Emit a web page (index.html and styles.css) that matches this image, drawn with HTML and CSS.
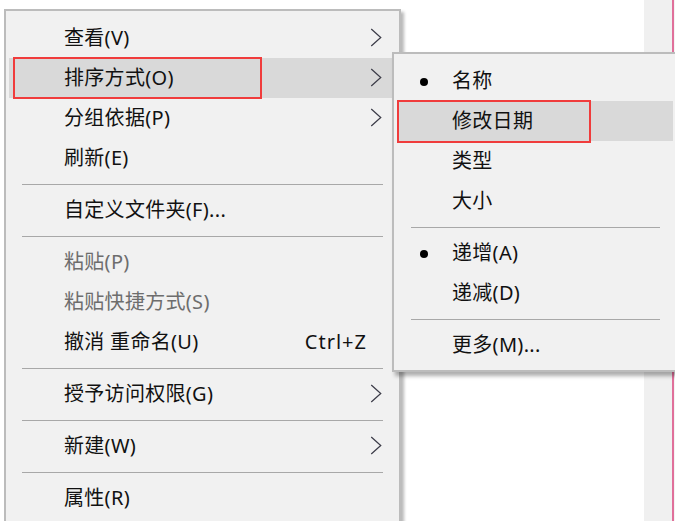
FILE: index.html
```
<!DOCTYPE html>
<html lang="zh-CN">
<head>
<meta charset="utf-8">
<title>右键菜单</title>
<link rel="stylesheet" href="styles.css">
</head>
<body>
<div class="desk">
  <div class="window"></div>
  <div class="strip"></div>
  <div class="pink"></div>
  <div class="rest"></div>
</div>

<div class="menu main">
  <div class="item"><span class="label">查看(V)</span><svg class="arrow" viewBox="0 0 12 20"><polyline points="1,1 11,10 1,19"/></svg></div>
  <div class="item active"><span class="label">排序方式(O)</span><svg class="arrow" viewBox="0 0 12 20"><polyline points="1,1 11,10 1,19"/></svg></div>
  <div class="item"><span class="label">分组依据(P)</span><svg class="arrow" viewBox="0 0 12 20"><polyline points="1,1 11,10 1,19"/></svg></div>
  <div class="item"><span class="label">刷新(E)</span></div>
  <div class="sep"></div>
  <div class="item"><span class="label">自定义文件夹(F)...</span></div>
  <div class="sep"></div>
  <div class="item disabled"><span class="label">粘贴(P)</span></div>
  <div class="item disabled"><span class="label">粘贴快捷方式(S)</span></div>
  <div class="item"><span class="label">撤消 重命名(U)</span><span class="shortcut">Ctrl+Z</span></div>
  <div class="sep"></div>
  <div class="item"><span class="label">授予访问权限(G)</span><svg class="arrow" viewBox="0 0 12 20"><polyline points="1,1 11,10 1,19"/></svg></div>
  <div class="sep"></div>
  <div class="item"><span class="label">新建(W)</span><svg class="arrow" viewBox="0 0 12 20"><polyline points="1,1 11,10 1,19"/></svg></div>
  <div class="sep"></div>
  <div class="item"><span class="label">属性(R)</span></div>
</div>

<div class="menu sub">
  <div class="item checked"><span class="bullet"></span><span class="label">名称</span></div>
  <div class="item active"><span class="label">修改日期</span></div>
  <div class="item"><span class="label">类型</span></div>
  <div class="item"><span class="label">大小</span></div>
  <div class="sep"></div>
  <div class="item checked"><span class="bullet"></span><span class="label">递增(A)</span></div>
  <div class="item"><span class="label">递减(D)</span></div>
  <div class="sep"></div>
  <div class="item"><span class="label">更多(M)...</span></div>
</div>

<div class="mark mark-main"></div>
<div class="mark mark-sub"></div>
</body>
</html>
```
FILE: styles.css
```
html, body {
  margin: 0;
  padding: 0;
  width: 675px;
  height: 521px;
  overflow: hidden;
  background: #ffffff;
  font-family: "Noto Sans", "Noto Sans CJK SC", sans-serif;
}

.desk {
  display: flex;
  width: 675px;
  height: 521px;
}
.window { width: 644px; background: #ffffff; }
.strip { width: 28px; background: #f0f0f0; }
.pink { width: 2px; background: #e0709a; }
.rest { flex: 1; background: #f4f4f4; }

.menu {
  position: absolute;
  box-sizing: border-box;
  background: #f1f1f1;
  border: 2px solid #bcbcbc;
  padding: 7px 3px 5px;
  display: flex;
  flex-direction: column;
}
.main {
  left: 4px;
  top: 9px;
  width: 397px;
  height: 530px;
  padding-top: 7px;
  box-shadow: 3px 3px 3px rgba(0, 0, 0, 0.28);
}
.sub {
  left: 392px;
  top: 52px;
  width: 286px;
  height: 320px;
  box-shadow: 3px 4px 4px rgba(0, 0, 0, 0.32);
}

.item {
  position: relative;
  height: 40px;
  display: flex;
  align-items: center;
  padding-left: 55px;
  font-size: 20px;
  line-height: 40px;
  color: #111;
  white-space: nowrap;
}
.item.active { background: #d9d9d9; }
.item.disabled { color: #6d6d6d; }

.label { flex: 1; letter-spacing: 0.3px; }

.shortcut {
  margin-right: 29px;
  letter-spacing: 1px;
}

.arrow {
  width: 12px;
  height: 19px;
  margin-right: 14px;
  margin-top: -2px;
  fill: none;
  stroke: #3c3c48;
  stroke-width: 1.3;
}

.bullet {
  position: absolute;
  left: 23px;
  top: 17px;
  width: 8px;
  height: 8px;
  border-radius: 50%;
  background: #000;
}

.sep {
  height: 12px;
  display: flex;
  align-items: center;
  margin: 0 13px;
}
.sep::before {
  content: "";
  flex: 1;
  height: 1px;
  background: #a8a8a8;
}
.sub .sep { margin: 0 13px 0 14px; }

.mark {
  position: absolute;
  box-sizing: border-box;
  border: 2.5px solid #f03c3c;
}
.mark-main {
  left: 13px;
  top: 57px;
  width: 249px;
  height: 42px;
}
.mark-sub {
  left: 397px;
  top: 100px;
  width: 194px;
  height: 43px;
}
```
